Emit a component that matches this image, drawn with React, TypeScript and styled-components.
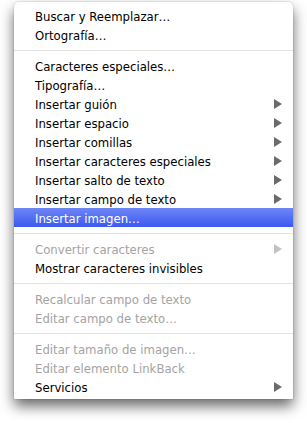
import styled, { createGlobalStyle } from 'styled-components';

const GlobalStyle = createGlobalStyle`
  html, body {
    margin: 0;
    padding: 0;
    background: #ffffff;
  }
`;

const Page = styled.div`
  width: 307px;
  height: 423px;
  padding: 2px 0 0 14px;
  box-sizing: border-box;
`;

const Menu = styled.div`
  width: 279px;
  padding: 4px 0 3px;
  background: #ffffff;
  border-radius: 5px 5px 1px 1px;
  box-shadow: 0 0 0 1px rgba(0, 0, 0, 0.06), 0 7px 14px rgba(0, 0, 0, 0.6);
  font-family: 'DejaVu Sans Condensed', 'DejaVu Sans', sans-serif;
  font-stretch: condensed;
  font-size: 13px;
`;

const Row = styled.div<{ $active?: boolean; $disabled?: boolean }>`
  display: flex;
  align-items: center;
  justify-content: space-between;
  height: 19px;
  padding: 0 11px 0 21px;
  color: ${({ $active, $disabled }) => ($active ? '#ffffff' : $disabled ? '#a3a3a3' : '#000000')};
  background: ${({ $active }) => ($active ? 'linear-gradient(#6f86f6, #3b58f2)' : 'transparent')};
  white-space: nowrap;
`;

const Label = styled.span`
  padding-top: 2px;
`;

const Arrow = styled.span<{ $disabled?: boolean }>`
  width: 0;
  height: 0;
  border-top: 5px solid transparent;
  border-bottom: 5px solid transparent;
  border-left: 8px solid ${({ $disabled }) => ($disabled ? '#c2c2c2' : '#6b6b6b')};
`;

const Separator = styled.div`
  height: 12px;
  display: flex;
  align-items: center;

  &::after {
    content: '';
    flex: 1;
    height: 1px;
    background: #e3e3e3;
  }
`;

type Item = { label: string; sub?: boolean; disabled?: boolean; active?: boolean } | 'sep';

const items: Item[] = [
  { label: 'Buscar y Reemplazar…' },
  { label: 'Ortografía…' },
  'sep',
  { label: 'Caracteres especiales…' },
  { label: 'Tipografía…' },
  { label: 'Insertar guión', sub: true },
  { label: 'Insertar espacio', sub: true },
  { label: 'Insertar comillas', sub: true },
  { label: 'Insertar caracteres especiales', sub: true },
  { label: 'Insertar salto de texto', sub: true },
  { label: 'Insertar campo de texto', sub: true },
  { label: 'Insertar imagen…', active: true },
  'sep',
  { label: 'Convertir caracteres', sub: true, disabled: true },
  { label: 'Mostrar caracteres invisibles' },
  'sep',
  { label: 'Recalcular campo de texto', disabled: true },
  { label: 'Editar campo de texto…', disabled: true },
  'sep',
  { label: 'Editar tamaño de imagen…', disabled: true },
  { label: 'Editar elemento LinkBack', disabled: true },
  { label: 'Servicios', sub: true },
];

export default function App() {
  return (
    <>
      <GlobalStyle />
      <Page>
        <Menu>
          {items.map((item, i) =>
            item === 'sep' ? (
              <Separator key={i} />
            ) : (
              <Row key={i} $active={item.active} $disabled={item.disabled}>
                <Label>{item.label}</Label>
                {item.sub && <Arrow $disabled={item.disabled} />}
              </Row>
            ),
          )}
        </Menu>
      </Page>
    </>
  );
}
